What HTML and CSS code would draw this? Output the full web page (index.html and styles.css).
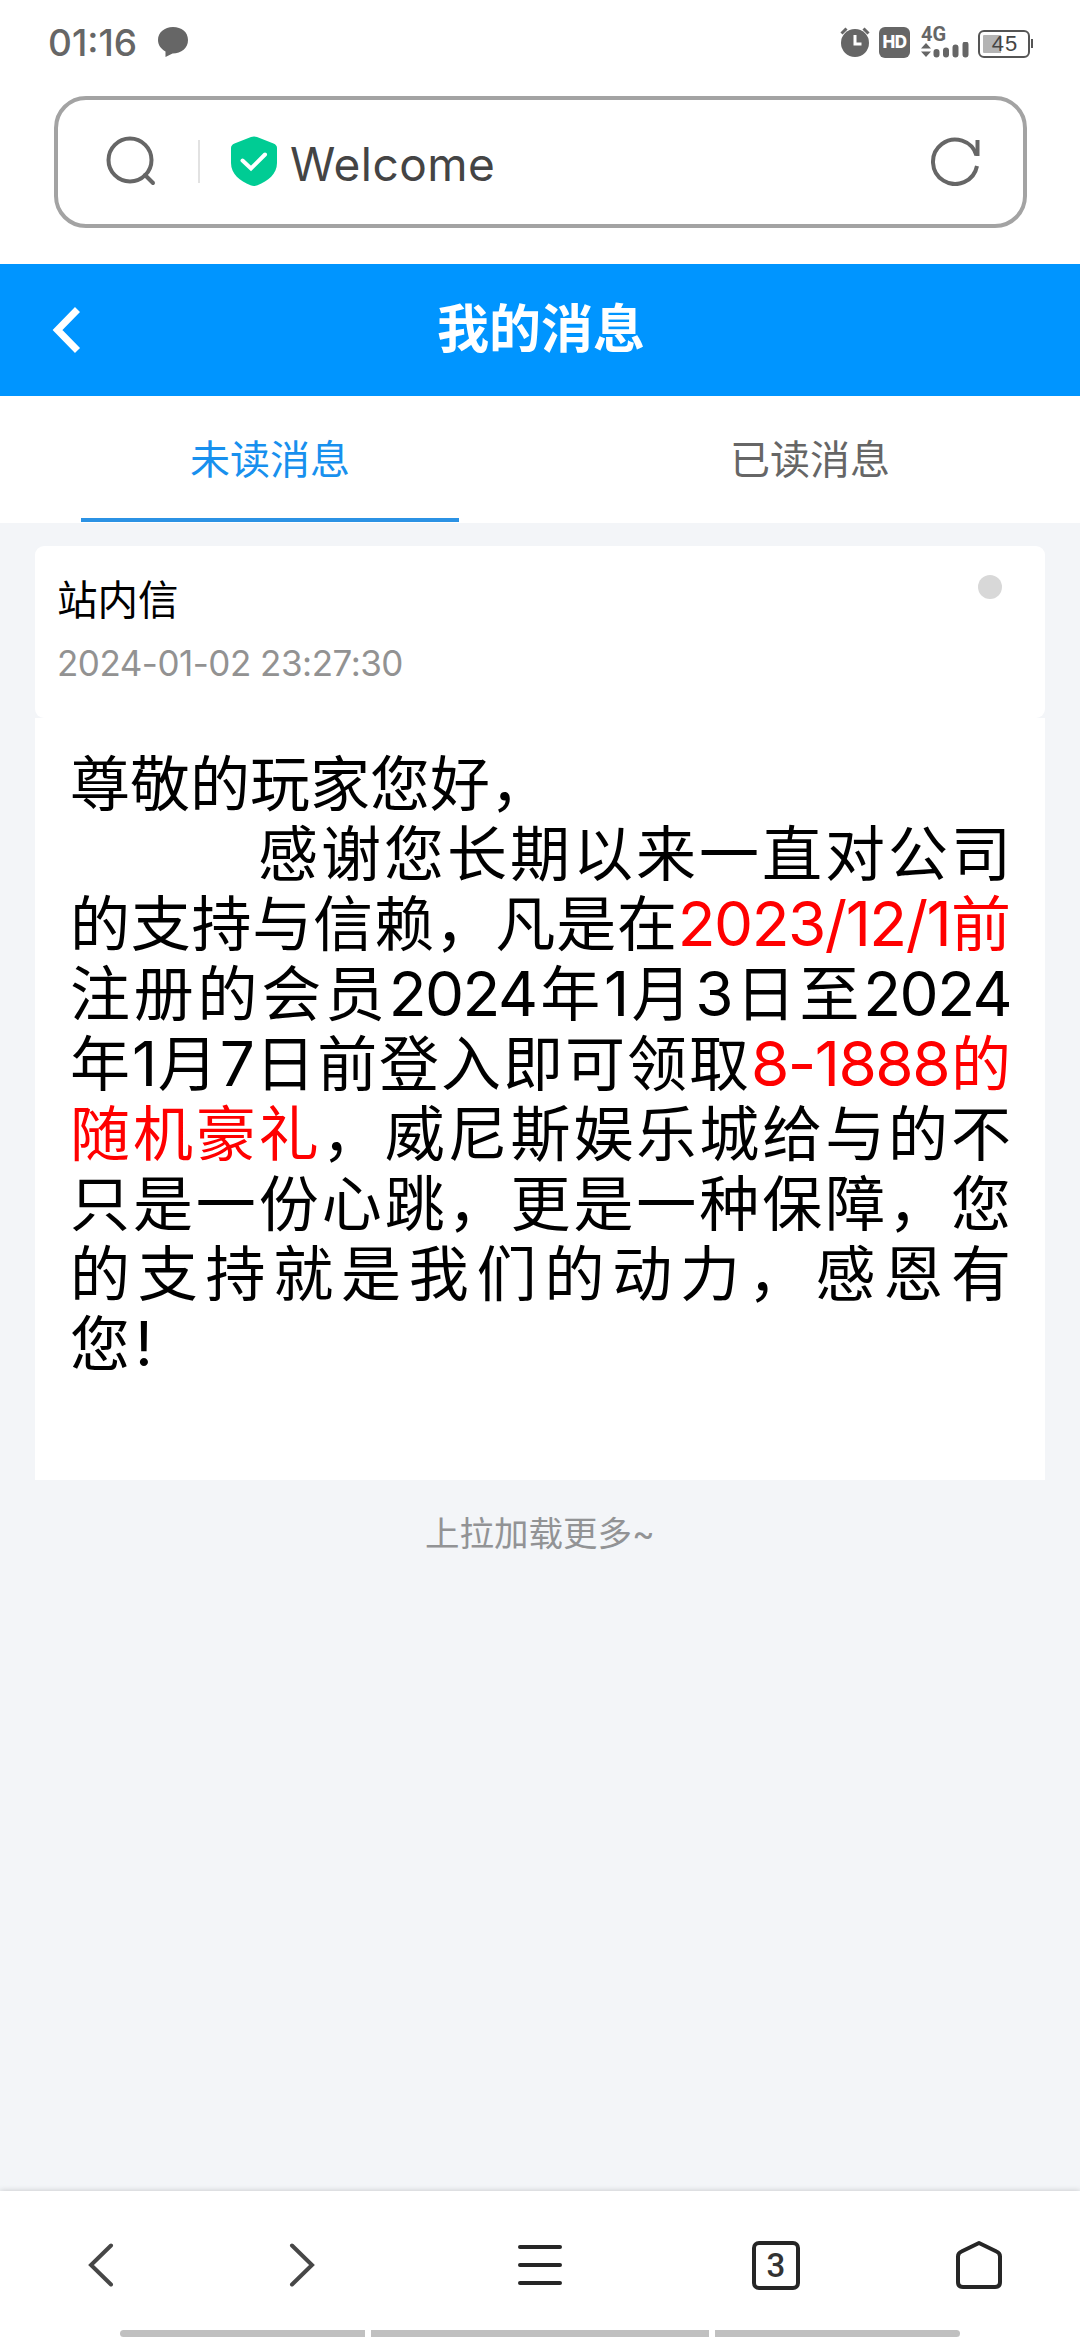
FILE: index.html
```html
<!DOCTYPE html>
<html lang="zh-CN">
<head>
<meta charset="utf-8">
<title>我的消息</title>
<link rel="stylesheet" href="styles.css">
</head>
<body>
<div class="screen">
  <div class="status">
    <span class="clock">01:16</span>
    <svg class="chat" width="32" height="32" viewBox="0 0 32 32"><path fill="#666" d="M16 1C7.500 1 1 6.500 1 14c0 5 3 9 7.500 11.500V31l7-3.500C24.500 27.500 31 22 31 14S24.500 1 16 1z"/></svg>
    <div class="status-icons">
      <svg class="alarm" width="30" height="30" viewBox="0 0 30 30"><circle cx="15" cy="16" r="14" fill="#666"/><path d="M1.500 6.500l5-5M28.500 6.500l-5-5" stroke="#666" stroke-width="3"/><path d="M15 8v9h6.500" fill="none" stroke="#fff" stroke-width="3"/></svg>
      <span class="hd">HD</span>
      <div class="signal">
        <span class="net">4G</span>
        <svg width="48" height="16" viewBox="0 0 48 16"><path fill="#666" d="M0 6.500L5 1l5 5.500zM0 9.500h10L5 15z"/><path d="M15.500 10v2.500M25 8.500v4M34.500 5.500v7M44.500 2.500v10" stroke="#666" stroke-width="6" stroke-linecap="round"/></svg>
      </div>
      <div class="battery"><span class="level">45</span></div>
      <span class="nub"></span>
    </div>
  </div>

  <div class="url">
    <svg class="search" width="50" height="50" viewBox="0 0 50 50" fill="none" stroke="#666" stroke-width="4"><circle cx="24" cy="24" r="21.500"/><path d="M39 39l8 8" stroke-linecap="round"/></svg>
    <span class="sep"></span>
    <svg class="shield" width="46" height="50" viewBox="0 0 46 50"><path fill="#00cc94" d="M20 1q3-1.200 6 0l16.500 6.500Q46 9 46 12v15c0 11-9 18-19.500 22.300q-3.500 1.200-7 0C9 45 0 38 0 27V12q0-3 3.500-4.500z"/><path d="M11.500 24.500l8.500 8L34 18.500" fill="none" stroke="#fff" stroke-width="4" stroke-linecap="round"/></svg>
    <span class="page">Welcome</span>
    <svg class="reload" width="50" height="50" viewBox="0 0 50 50" fill="none" stroke="#666" stroke-width="4"><path d="M46 30A22.200 22.200 0 1 1 45.500 19.500"/><path d="M46.500 4v16"/></svg>
  </div>

  <div class="header">
    <svg class="back" width="30" height="48" viewBox="0 0 30 48"><path d="M26.500 3.500L6.500 24l20 20.500" fill="none" stroke="#fff" stroke-width="7"/></svg>
    <span class="title">我的消息</span>
  </div>

  <div class="tabs">
    <div class="tab active">未读消息</div>
    <div class="tab">已读消息</div>
  </div>

  <div class="content">
    <div class="card">
      <div>
        <div class="subject">站内信</div>
        <div class="date">2024-01-02 23:27:30</div>
      </div>
      <span class="dot"></span>
    </div>
    <div class="message">
      <div class="line last">尊敬的玩家您好，</div>
      <div class="line indent">感谢您长期以来一直对公司</div>
      <div class="line">的支持与信赖，凡是在<span class="red"><span class="num">2023/12/1</span>前</span></div>
      <div class="line">注册的会员<span class="num">2024</span>年<span class="num">1</span>月<span class="num">3</span>日至<span class="num">2024</span></div>
      <div class="line">年<span class="num">1</span>月<span class="num">7</span>日前登入即可领取<span class="red"><span class="num">8-1888</span>的</span></div>
      <div class="line"><span class="red">随机豪礼</span>，威尼斯娱乐城给与的不</div>
      <div class="line">只是一份心跳，更是一种保障，您</div>
      <div class="line">的支持就是我们的动力，感恩有</div>
      <div class="line last">您<span class="num bang">!</span></div>
    </div>
    <div class="more">上拉加载更多~</div>
  </div>

  <div class="nav">
    <svg width="26" height="44" viewBox="0 0 26 44" fill="none" stroke="#474747" stroke-width="4" stroke-linecap="round"><path d="M23 2.500L3 22l20 19.500"/></svg>
    <svg width="26" height="44" viewBox="0 0 26 44" fill="none" stroke="#474747" stroke-width="4" stroke-linecap="round"><path d="M3 2.500L23 22 3 41.500"/></svg>
    <svg width="44" height="42" viewBox="0 0 44 42" stroke="#262626" stroke-width="4" stroke-linecap="round"><path d="M2 3h40M2 21h40M2 39h40"/></svg>
    <div class="count">3</div>
    <svg class="home" width="48" height="50" viewBox="0 0 48 50" fill="none" stroke="#262626" stroke-width="4" stroke-linejoin="round"><path d="M24 3l17.500 8.500q3.500 1.500 3.500 5V42q0 5-5 5H8q-5 0-5-5V16.500q0-3.500 3.500-5z"/></svg>
  </div>
  <div class="gesture"><span></span><span></span><span></span></div>
</div>
</body>
</html>
```
FILE: styles.css
```css
* { box-sizing: border-box; }
body { margin: 0; font-family: Inter, "Noto Sans CJK SC", sans-serif; background: #fff; }
svg { display: block; flex: none; }
.screen { width: 1080px; height: 2340px; display: flex; flex-direction: column; overflow: hidden; }

.status { height: 96px; padding: 26px 47px 0 48px; display: flex; align-items: flex-start; color: #666; }
.clock { width: 109px; font-size: 37px; line-height: 33px; font-weight: 450; white-space: nowrap; }
.status-icons { margin-left: auto; display: flex; align-items: flex-start; }
.alarm { margin: 1px 9px 0 0; }
.hd { width: 31px; height: 31px; margin: 1px 11px 0 0; border-radius: 6px; background: #666; color: #fff; font: 800 17px/31px Inter, sans-serif; text-align: center; letter-spacing: -0.5px; }
.signal { width: 49px; height: 32px; margin-right: 8px; }
.net { display: block; height: 16px; font: 700 20px/17px Roboto, sans-serif; }
.battery { width: 52px; height: 28px; margin-top: 4px; border: 2px solid #555; border-radius: 6px; padding: 3px; background: linear-gradient(#b4b4b4, #b4b4b4) 0 0 / 18px 18px no-repeat content-box; }
.level { display: block; margin: -3px 0 0 2px; font: 400 22px/24px "Liberation Sans", sans-serif; letter-spacing: 1px; text-align: center; color: #444; }
.nub { width: 2px; height: 9px; margin: 13px 0 0 1px; background: #555; }

.url { width: 973px; height: 132px; margin-left: 54px; border: 4px solid #a3a3a3; border-radius: 32px; display: flex; align-items: center; padding: 0 42px 2px 48px; }
.sep { width: 2px; height: 43px; margin: 0 31px 0 42px; background: #e2e2e2; }
.page { flex: 1; margin-left: 13px; font-size: 46px; font-weight: 400; letter-spacing: 0.5px; line-height: 54px; color: #444; padding-top: 6px; }

.header { height: 132px; margin-top: 36px; background: #0095ff; display: flex; align-items: center; padding: 0 50px 0 51px; color: #fff; }
.title { flex: 1; margin-right: 29px; text-align: center; font-size: 52px; font-weight: 700; line-height: 60px; }

.tabs { height: 127px; display: flex; }
.tab { width: 378px; margin: 0 81px; height: 126px; border-bottom: 4px solid transparent; text-align: center; font-size: 40px; line-height: 128px; color: #666; }
.tab.active { color: #1890ee; border-color: #2b92e4; }

.content { flex: 1; background: #f3f5f8; padding: 23px 35px 0; }
.card { height: 172px; padding: 29px 43px 0 22px; background: #fff; border-radius: 9px; display: flex; justify-content: space-between; }
.subject { font-size: 40.5px; line-height: 52px; color: #000; }
.date { margin-top: 15px; font-size: 35px; letter-spacing: -0.5px; line-height: 42px; color: #929292; white-space: nowrap; }
.dot { width: 24px; height: 24px; border-radius: 50%; background: #d8d8d8; }
.message { height: 762px; background: #fff; padding: 31px 34px 0 35px; color: #000; }
.line { height: 70px; font-size: 60px; line-height: 70px; white-space: nowrap; text-align: justify; text-align-last: justify; }
.line.last { text-align-last: left; }
.indent { padding-left: 188px; }
.num { font-size: 62px; letter-spacing: -1.5px; }
.bang { margin-left: 5px; }
.red { color: #f00; }
.more { margin-top: 31px; text-align: center; font-size: 34.5px; line-height: 46px; color: #929395; }

.nav { position: relative; height: 139px; background: #fff; box-shadow: 0 0 6px rgba(0,0,0,.2); display: grid; grid-template-columns: 202px 200px 276px 196px 206px; justify-items: center; align-items: center; padding-top: 9px; }
.count { width: 48px; height: 49px; border: 4px solid #262626; border-radius: 7px; font: 500 33px/41px Roboto, sans-serif; text-align: center; color: #333; }
.home { margin-left: 4px; }
.gesture { position: relative; height: 10px; background: #fff; display: grid; grid-template-columns: 245px 338px 245px; column-gap: 6px; padding-left: 120px; }
.gesture span { height: 7px; background: #c0c0c0; }
.gesture span:first-child { border-radius: 4px 0 0 4px; }
.gesture span:last-child { border-radius: 0 4px 4px 0; }
```
